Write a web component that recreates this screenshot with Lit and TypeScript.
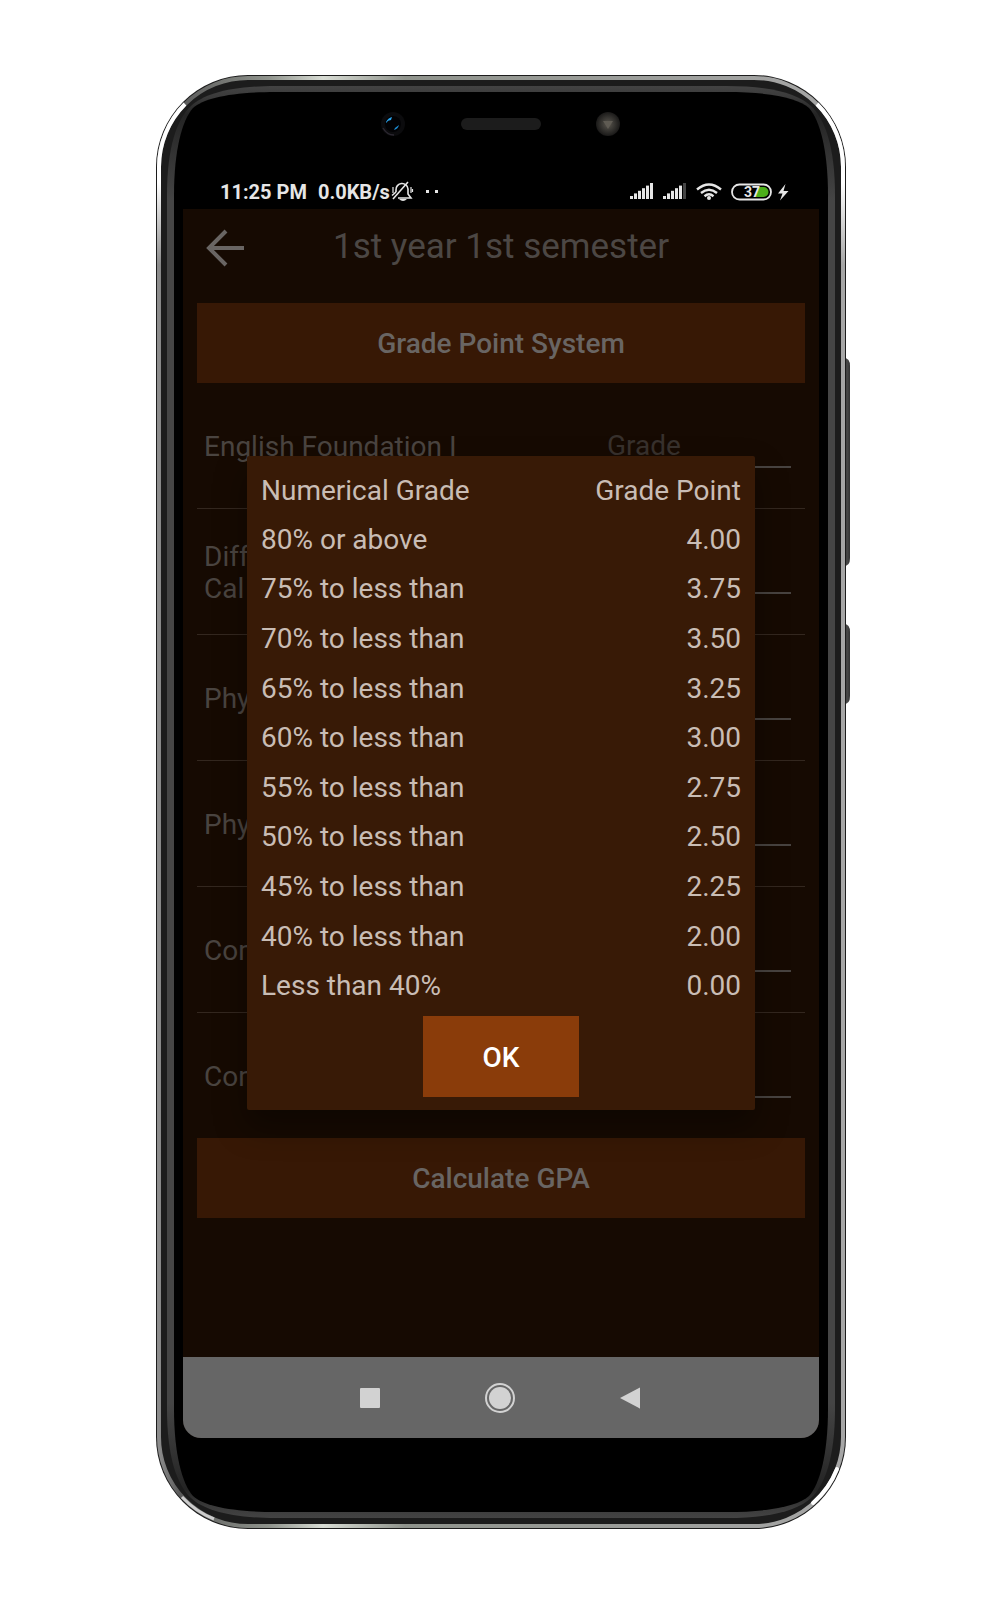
import { LitElement, html, css, svg } from "lit";
import { customElement, state } from "lit/decorators.js";

type Course = { id: string; name: string };

const courses: Course[] = [
  { id: "eng", name: "English Foundation I" },
  { id: "calc", name: "Diff\nCal" },
  { id: "phy1", name: "Phy" },
  { id: "phy2", name: "Phy" },
  { id: "com1", name: "Com" },
  { id: "com2", name: "Com" },
];

const grades: [string, string][] = [
  ["80% or above", "4.00"],
  ["75% to less than", "3.75"],
  ["70% to less than", "3.50"],
  ["65% to less than", "3.25"],
  ["60% to less than", "3.00"],
  ["55% to less than", "2.75"],
  ["50% to less than", "2.50"],
  ["45% to less than", "2.25"],
  ["40% to less than", "2.00"],
  ["Less than 40%", "0.00"],
];

type Point = [number, number];

/** Closed outline whose four corners mirror one pair of cubic curves. */
function outline(corner: Point[], width: number, height: number): string {
  const flipX = (p: Point): Point => [width - p[0], p[1]];
  const flipY = (p: Point): Point => [p[0], height - p[1]];
  const back = [...corner].reverse();
  const runs = [
    corner,
    back.map(flipX),
    corner.map((p) => flipY(flipX(p))),
    back.map(flipY),
  ];
  return runs
    .map((run, i) => `${i ? "L" : "M"}${run[0].join(" ")}C${run.slice(1).map((p) => p.join(" ")).join(" ")}`)
    .join("") + "Z";
}

const bezel: Point[] = [[11, 120], [11, 72], [21, 44], [35, 31], [48, 19], [74, 11], [120, 11]];
const glass: Point[] = [[18, 120], [18, 76], [26, 45], [37, 33], [48, 23], [76, 17], [120, 17]];

/** Phone body drawn behind the display; stretches with the device box. */
@customElement("phone-frame")
export class PhoneFrame extends LitElement {
  static styles = css`
    :host { display: block; }
    .body { display: block; width: 100%; height: 100%; }
  `;

  render() {
    return html`
      <svg class="body" viewBox="0 0 694 1454" preserveAspectRatio="none" aria-hidden="true">
        <defs>
          <linearGradient id="key" x1="0" x2="1" y1="0" y2="0">
            <stop offset="0" stop-color="#222" />
            <stop offset="0.5" stop-color="#4a4a4a" />
            <stop offset="1" stop-color="#333" />
          </linearGradient>
          <linearGradient id="rim" x1="0" x2="1" y1="0" y2="0">
            <stop offset="0" stop-color="#8c8c8c" />
            <stop offset="0.03" stop-color="#5a5a5a" />
            <stop offset="0.16" stop-color="#8f938c" />
            <stop offset="0.24" stop-color="#d8dcd4" />
            <stop offset="0.36" stop-color="#8f938c" />
            <stop offset="1" stop-color="#a6a6a6" />
          </linearGradient>
          <linearGradient id="shine" gradientUnits="userSpaceOnUse" x1="0" x2="0" y1="26" y2="190">
            <stop offset="0" stop-color="#fff" />
            <stop offset="0.5" stop-color="#fff" />
            <stop offset="1" stop-color="#fff" stop-opacity="0" />
          </linearGradient>
          <linearGradient id="edge" gradientUnits="userSpaceOnUse" x1="0" x2="0" y1="11" y2="1443">
            <stop offset="0" stop-color="#434343" />
            <stop offset="0.008" stop-color="#3a3a3a" />
            <stop offset="0.02" stop-color="#242424" />
            <stop offset="0.08" stop-color="#454545" />
            <stop offset="0.92" stop-color="#454545" />
            <stop offset="0.98" stop-color="#242424" />
            <stop offset="0.992" stop-color="#3a3a3a" />
            <stop offset="1" stop-color="#434343" />
          </linearGradient>
        </defs>
        <path d="M688 283q6 0 6 8v192q0 8-6 8z" fill="url(#key)" />
        <path d="M688 549q6 0 6 8v64q0 8-6 8z" fill="url(#key)" />
        <rect x="0" y="0" width="690" height="1454" rx="92" ry="92" fill="#1c1c1c" />
        <rect x="3" y="3" width="684" height="1448" rx="89" ry="89" fill="none" stroke="url(#rim)" stroke-width="4" />
        <path d="M3 190V92A89 89 0 0 1 29 29" fill="none" stroke="url(#shine)" stroke-width="4" />
        <path d="M661 29A89 89 0 0 1 687 92V190" fill="none" stroke="url(#shine)" stroke-width="4" />
        <path d="M681 1394A89 89 0 0 1 657 1428" fill="none" stroke="#fff" stroke-width="4" stroke-linecap="round" />
        <path d="M26 1422A89 89 0 0 0 58 1444" fill="none" stroke="#ccc" stroke-width="3" />
        <path d=${outline(bezel, 690, 1454)} fill="url(#edge)" />
        <path d=${outline(glass, 690, 1454)} fill="#000" />
      </svg>
    `;
  }
}

/** Clock, traffic and signal indicators. */
@customElement("status-bar")
export class StatusBar extends LitElement {
  static styles = css`
    :host {
      display: flex;
      align-items: center;
      justify-content: space-between;
      height: 36px;
      padding: 0 30px 0 37px;
      color: #e6e6e6;
      font: 700 20px/24px Roboto, sans-serif;
    }
    .group { display: flex; align-items: center; padding-top: 1px; }
    .clock { margin-right: 11px; }
    .icon { display: block; }
  `;

  private signal(full: boolean) {
    const bars = [0, 1, 2, 3, 4, 5];
    return bars.map((i) => svg`
      <rect x=${i * 4 + 1} y=${13 - i * 2.6} width="3" height=${3 + i * 2.6}
        fill=${!full && i === 5 ? "#444" : "#e6e6e6"} />`);
  }

  render() {
    return html`
      <div class="group">
        <span class="clock">11:25 PM</span>
        <span>0.0KB/s</span>
        <svg class="icon" width="54" height="22" viewBox="2 0 54 22" aria-hidden="true">
          <g fill="none" stroke="#e6e6e6" stroke-width="1.6">
            <path d="M8 11V9a6 6 0 0 1 12-1v5l3 4H10" />
            <path d="M20 1L5 18M4 14.500L8 11" />
            <path d="M5 6v6M23 6v6M24.500 8v3" stroke-width="1.200" />
          </g>
          <path d="M11 18h8q-4 4-8 0z" fill="#e6e6e6" />
          <rect x="38" y="9" width="3" height="3" fill="#e6e6e6" />
          <rect x="47" y="9" width="3" height="3" fill="#e6e6e6" />
        </svg>
      </div>
      <div class="group">
        <svg class="icon" width="160" height="18" viewBox="0 0 160 18" aria-hidden="true">
          ${this.signal(true)}
          <g transform="translate(33 0)">${this.signal(false)}</g>
          <g fill="none" stroke="#e6e6e6" stroke-width="2.400">
            <path d="M68 6.500Q80-3.500 92 6.500" />
            <path d="M72 10Q80 3.500 88 10" />
            <path d="M75.500 13.200Q80 9.500 84.500 13.200" />
          </g>
          <circle cx="80" cy="15" r="2" fill="#e6e6e6" />
          <rect x="103" y="1.500" width="39" height="15" rx="7.500" fill="none" stroke="#e6e6e6" stroke-width="1.800" />
          <path d="M130 4h4.500a5 5 0 0 1 0 10H126z" fill="#4caf1a" />
          <text x="115" y="14" font-family="Roboto, sans-serif" font-size="14" font-weight="700" fill="#e6e6e6">37</text>
          <path d="M156.500 1L149 10.500h4.500L151 17.500L159.500 8H154.500z" fill="#e6e6e6" />
        </svg>
      </div>
    `;
  }
}

/** Grade table shown over the course list. */
@customElement("grade-dialog")
export class GradeDialog extends LitElement {
  static styles = css`
    :host {
      display: block;
      box-sizing: border-box;
      padding: 10px 14px 13px;
      border-radius: 2px;
      background: #381a06;
      box-shadow: 0 16px 32px rgba(0, 0, 0, 0.35);
      color: #c9bdb5;
      font: 400 28px/32px Roboto, sans-serif;
    }
    .grades {
      width: 100%;
      height: 545px;
      border-collapse: collapse;
    }
    .cell { height: 49px; padding: 0; font-weight: 400; text-align: left; }
    .point { text-align: right; }
    .ok {
      display: block;
      width: 156px;
      height: 81px;
      margin: 5px auto 0;
      padding: 2px 0 0;
      border: 0;
      background: #8a3c0a;
      color: #fff;
      font: 500 28px/32px Roboto, sans-serif;
    }
  `;

  private close() {
    this.dispatchEvent(new CustomEvent("dismiss"));
  }

  render() {
    return html`
      <table class="grades">
        <thead>
          <tr>
            <th class="cell" scope="col">Numerical Grade</th>
            <th class="cell point" scope="col">Grade Point</th>
          </tr>
        </thead>
        <tbody>
          ${grades.map(([range, point]) => html`
            <tr>
              <td class="cell">${range}</td>
              <td class="cell point">${point}</td>
            </tr>`)}
        </tbody>
      </table>
      <button class="ok" type="button" @click=${this.close}>OK</button>
    `;
  }
}

@customElement("app-root")
export class AppRoot extends LitElement {
  static styles = css`
    :host {
      display: block;
      box-sizing: border-box;
      min-height: 100vh;
      padding: 75px 16px 71px;
      background: #fff;
      font-family: Roboto, sans-serif;
    }
    .phone {
      position: relative;
      box-sizing: border-box;
      max-width: 694px;
      margin: 0 auto;
      padding: 0 31px 91px 27px;
    }
    .frame { position: absolute; inset: 0; }
    .device { position: relative; }
    .sensors {
      display: flex;
      justify-content: center;
      align-items: center;
      gap: 54px;
      height: 98px;
    }
    .sensor { display: block; }
    .speaker {
      width: 80px;
      height: 12px;
      border-radius: 6px;
      background: #1c1c1c;
    }
    .screen {
      position: relative;
      background: #160a02;
      border-radius: 0 0 18px 18px;
      overflow: hidden;
    }
    .header {
      display: grid;
      grid-template-columns: 60px 1fr 60px;
      align-items: center;
      height: 74px;
      padding: 0 14px;
    }
    .back {
      display: block;
      padding: 4px 8px 0;
      border: 0;
      background: none;
    }
    .title {
      margin: 0;
      padding-top: 2px;
      color: #4c4744;
      font-weight: 400;
      font-size: 35px;
      line-height: 40px;
      text-align: center;
    }
    .content { padding: 20px 14px 139px; }
    .action {
      display: block;
      width: 100%;
      height: 80px;
      padding: 2px 0 0;
      border: 0;
      background: #371805;
      color: #696563;
      font: 500 28px/32px Roboto, sans-serif;
    }
    .courses { margin: 0; padding: 0; list-style: none; }
    .course {
      display: grid;
      grid-template-columns: 1fr 196px;
      align-items: center;
      box-sizing: border-box;
      height: 126px;
      padding: 0 14px 0 7px;
      border-bottom: 1px solid #33271f;
    }
    .course:last-child { height: 125px; border-bottom: 0; }
    .name {
      padding-top: 2px;
      color: #4a4440;
      font-size: 28px;
      line-height: 32px;
      white-space: pre-line;
    }
    .grade {
      box-sizing: border-box;
      width: 100%;
      height: 44px;
      padding: 2px 12px 0;
      border: 0;
      border-bottom: 2px solid #484340;
      background: none;
      color: #4a4440;
      font: 400 28px/32px Roboto, sans-serif;
      outline: 0;
    }
    .grade::placeholder { color: #38312d; opacity: 1; }
    .dialog {
      position: absolute;
      top: 247px;
      left: 64px;
      right: 64px;
    }
    .nav {
      display: flex;
      justify-content: center;
      align-items: center;
      gap: 90px;
      height: 81px;
      padding-right: 2px;
      background: #666;
    }
    .key { display: block; padding: 0; border: 0; background: none; }
    .icon { display: block; }
  `;

  @state() private open = true;

  render() {
    return html`
      <main class="phone">
        <phone-frame class="frame"></phone-frame>
        <div class="device">
          <div class="sensors">
            <svg class="sensor" width="26" height="26" viewBox="0 0 26 26" aria-hidden="true">
              <circle cx="12" cy="13" r="12" fill="#0b0b0d" />
              <circle cx="12" cy="13" r="8" fill="#020204" />
              <path d="M5 11q2-4 6-5l-1 3q-3 0-5 3z" fill="#2ba6ee" />
              <path d="M18 14q-1 4-5 5l1-2z" fill="#1c8fd6" />
              <path d="M2 17q4 7 11 7" fill="none" stroke="#2b2730" stroke-width="1.500" />
            </svg>
            <div class="speaker"></div>
            <svg class="sensor" width="26" height="26" viewBox="0 0 26 26" aria-hidden="true">
              <defs>
                <radialGradient id="lens">
                  <stop offset="0" stop-color="#5a564e" />
                  <stop offset="0.5" stop-color="#3a3834" />
                  <stop offset="1" stop-color="#1a1918" />
                </radialGradient>
              </defs>
              <circle cx="13" cy="13" r="12" fill="url(#lens)" />
              <path d="M8 10h10l-5 8z" fill="#5f5b53" />
            </svg>
          </div>
          <status-bar></status-bar>
          <div class="screen">
            <header class="header">
              <button class="back" type="button" aria-label="Back">
                <svg class="icon" width="40" height="38" viewBox="0 0 40 38" aria-hidden="true">
                  <path d="M21 2L4 19L21 36M4 19H39" fill="none" stroke="#696563" stroke-width="4" />
                </svg>
              </button>
              <h1 class="title">1st year 1st semester</h1>
            </header>
            <div class="content">
              <button class="action" type="button" @click=${() => (this.open = true)}>Grade Point System</button>
              <ul class="courses">
                ${courses.map((c) => html`
                  <li class="course">
                    <label class="name" for=${c.id}>${c.name}</label>
                    <input class="grade" id=${c.id} type="text" placeholder="Grade" />
                  </li>`)}
              </ul>
              <button class="action" type="button">Calculate GPA</button>
            </div>
            ${this.open
              ? html`<grade-dialog class="dialog" role="dialog" aria-label="Grade Point System"
                  @dismiss=${() => (this.open = false)}></grade-dialog>`
              : null}
            <nav class="nav">
              <button class="key" type="button" aria-label="Recent apps">
                <svg class="icon" width="40" height="32" viewBox="0 0 40 32" aria-hidden="true">
                  <rect x="10" y="6" width="20" height="20" rx="1" fill="#d2d2d2" />
                </svg>
              </button>
              <button class="key" type="button" aria-label="Home">
                <svg class="icon" width="40" height="32" viewBox="0 0 40 32" aria-hidden="true">
                  <circle cx="20" cy="16" r="14" fill="none" stroke="#d2d2d2" stroke-width="2" />
                  <circle cx="20" cy="16" r="11" fill="#d2d2d2" />
                </svg>
              </button>
              <button class="key" type="button" aria-label="Back">
                <svg class="icon" width="40" height="32" viewBox="0 0 40 32" aria-hidden="true">
                  <path d="M10 16L29 6Q30 5 30 6V26Q30 27 29 26z" fill="#d2d2d2" />
                </svg>
              </button>
            </nav>
          </div>
        </div>
      </main>
    `;
  }
}
